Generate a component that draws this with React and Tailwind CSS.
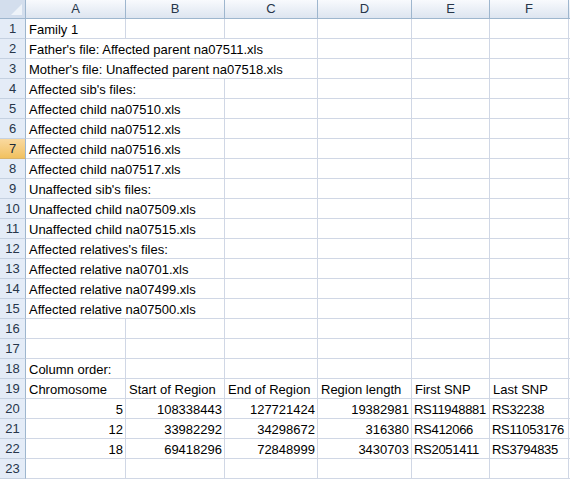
import React from "react";

const GRID = "grid grid-cols-[26px_100px_99px_93px_94px_78px_79px_1fr]";

const rows = [
  [{ t: "Family 1" }],
  [{ t: "Father's file: Affected parent na07511.xls", span: 3 }],
  [{ t: "Mother's file: Unaffected parent na07518.xls", span: 3 }],
  [{ t: "Affected sib's files:", span: 2 }],
  [{ t: "Affected child na07510.xls", span: 2 }],
  [{ t: "Affected child na07512.xls", span: 2 }],
  [{ t: "Affected child na07516.xls", span: 2 }],
  [{ t: "Affected child na07517.xls", span: 2 }],
  [{ t: "Unaffected sib's files:", span: 2 }],
  [{ t: "Unaffected child na07509.xls", span: 2 }],
  [{ t: "Unaffected child na07515.xls", span: 2 }],
  [{ t: "Affected relatives's files:", span: 2 }],
  [{ t: "Affected relative na0701.xls", span: 2 }],
  [{ t: "Affected relative na07499.xls", span: 2 }],
  [{ t: "Affected relative na07500.xls", span: 2 }],
  [],
  [],
  [{ t: "Column order:" }],
  [
    { t: "Chromosome" },
    { t: "Start of Region" },
    { t: "End of Region" },
    { t: "Region length" },
    { t: "First SNP" },
    { t: "Last SNP" },
  ],
  [
    { t: "5", r: true },
    { t: "108338443", r: true },
    { t: "127721424", r: true },
    { t: "19382981", r: true },
    { t: "RS11948881", n: true },
    { t: "RS32238", n: true },
  ],
  [
    { t: "12", r: true },
    { t: "33982292", r: true },
    { t: "34298672", r: true },
    { t: "316380", r: true },
    { t: "RS412066", n: true },
    { t: "RS11053176", n: true },
  ],
  [
    { t: "18", r: true },
    { t: "69418296", r: true },
    { t: "72848999", r: true },
    { t: "3430703", r: true },
    { t: "RS2051411", n: true },
    { t: "RS3794835", n: true },
  ],
  [],
];

const spanClass = { 1: "col-span-1", 2: "col-span-2", 3: "col-span-3" };

function Row({ n, cells }) {
  const out = [];
  let used = 0;
  cells.forEach((c, i) => {
    const span = c.span || 1;
    used += span;
    out.push(
      <div
        key={i}
        className={`${spanClass[span]} h-5 border-r border-b border-[#d0d7e5] px-[3px] whitespace-nowrap leading-[21px] text-black ${
          c.r ? "text-right pr-[2px]" : ""
        } ${c.n ? "tracking-[-0.3px] pl-[2px]" : ""}`}
      >
        {c.t}
      </div>
    );
  });
  for (let k = used; k < 6; k++) {
    out.push(<div key={"e" + k} className="h-5 border-r border-b border-[#d0d7e5]" />);
  }
  const selected = n === 7;
  return (
    <div className={GRID}>
      <div
        className={`h-5 border-r border-b text-center leading-[20px] ${
          selected
            ? "bg-gradient-to-b from-[#f9d99f] to-[#f1c15f] border-r-[#9eb6ce] border-b-[#d9b36a] text-[#1b2a3a]"
            : "bg-[#e4ecf7] border-r-[#9eb6ce] border-b-[#c5d1e1] text-[#27364a]"
        }`}
      >
        {n}
      </div>
      {out}
      <div className="h-5 border-b border-[#d0d7e5]" />
    </div>
  );
}

export default function App() {
  const letters = ["A", "B", "C", "D", "E", "F"];
  return (
    <div className="w-[570px] h-[479px] overflow-hidden bg-white font-['Liberation_Sans',Arial,sans-serif] text-[13px]">
      <div className={GRID}>
        <div className="relative h-[19px] border-r border-b border-[#9eb6ce] bg-[#d3deed]">
          <div className="absolute right-[3px] bottom-[3px] w-0 h-0 border-l-[11px] border-l-transparent border-b-[11px] border-b-[#eef3f9]" />
        </div>
        {letters.map((l) => (
          <div
            key={l}
            className="h-[19px] border-r border-b border-[#9eb6ce] bg-gradient-to-b from-[#f8fafd] to-[#dde5f0] text-center leading-[18px] text-[#27364a]"
          >
            {l}
          </div>
        ))}
        <div className="h-[19px] border-b border-[#9eb6ce] bg-gradient-to-b from-[#f8fafd] to-[#dde5f0]" />
      </div>
      {rows.map((cells, i) => (
        <Row key={i} n={i + 1} cells={cells} />
      ))}
    </div>
  );
}
